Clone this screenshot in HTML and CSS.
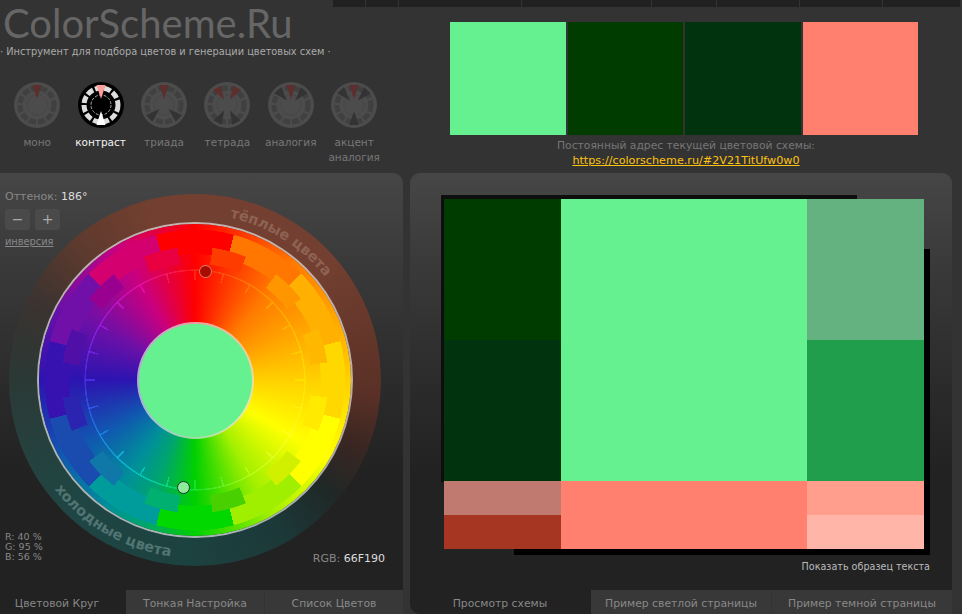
FILE: index.html
```html
<!DOCTYPE html>
<html lang="ru">
<head>
<meta charset="utf-8">
<title>ColorScheme.Ru</title>
<link rel="stylesheet" href="styles.css">
</head>
<body>
<svg class="defs" width="0" height="0" aria-hidden="true">
  <defs>
    <polygon id="tri" points="-4.5,-20 4.5,-20 0,-6"/>
    <g id="dial">
      <circle class="dial-disc" r="23"/>
      <circle class="dial-outer" r="17"/>
      <circle class="dial-inner" r="10"/>
    </g>
  </defs>
</svg>
<div class="page">
  <div class="topbar">
    <span class="tb tb1"></span><span class="tb tb2"></span><span class="tb tb3"></span><span class="tb tb4"></span><span class="tb tb5"></span><span class="tb tb6"></span><span class="tb tb7"></span><span class="tb tb8"></span>
  </div>
  <header class="head">
    <div class="brand">
      <h1 class="logo">ColorScheme.Ru</h1>
      <p class="tagline">· Инструмент для подбора цветов и генерации цветовых схем ·</p>
      <div class="modes">
        <div class="mode">
          <svg class="dial" viewBox="-23 -23 46 46"><use href="#dial"/><use href="#tri" class="t-red"/></svg>
          <span>моно</span>
        </div>
        <div class="mode active">
          <svg class="dial" viewBox="-23 -23 46 46"><use href="#dial"/><use href="#tri" class="t-red"/><use href="#tri" class="t-dark" transform="rotate(180)"/></svg>
          <span>контраст</span>
        </div>
        <div class="mode">
          <svg class="dial" viewBox="-23 -23 46 46"><use href="#dial"/><use href="#tri" class="t-red"/><use href="#tri" class="t-dark" transform="rotate(132)"/><use href="#tri" class="t-dark" transform="rotate(228)"/></svg>
          <span>триада</span>
        </div>
        <div class="mode">
          <svg class="dial" viewBox="-23 -23 46 46"><use href="#dial"/><use href="#tri" class="t-red" transform="rotate(-30)"/><use href="#tri" class="t-red" transform="rotate(30)"/><use href="#tri" class="t-dark" transform="rotate(152)"/><use href="#tri" class="t-dark" transform="rotate(208)"/></svg>
          <span>тетрада</span>
        </div>
        <div class="mode">
          <svg class="dial" viewBox="-23 -23 46 46"><use href="#dial"/><use href="#tri" class="t-red"/><use href="#tri" class="t-dark" transform="rotate(42)"/><use href="#tri" class="t-dark" transform="rotate(-42)"/></svg>
          <span>аналогия</span>
        </div>
        <div class="mode">
          <svg class="dial" viewBox="-23 -23 46 46"><use href="#dial"/><use href="#tri" class="t-red"/><use href="#tri" class="t-dark" transform="rotate(42)"/><use href="#tri" class="t-dark" transform="rotate(-42)"/><use href="#tri" class="t-dark" transform="rotate(180)"/></svg>
          <span>акцент<br>аналогия</span>
        </div>
      </div>
    </div>
    <div class="current">
      <div class="swatches">
        <div class="sw c-main"></div>
        <div class="sw c-dark1"></div>
        <div class="sw c-dark2"></div>
        <div class="sw c-coral"></div>
      </div>
      <p class="permalink-label">Постоянный адрес текущей цветовой схемы:</p>
      <a class="permalink" href="#">https://colorscheme.ru/#2V21TitUfw0w0</a>
    </div>
  </header>
  <main class="columns">
    <section class="col col-left">
      <div class="panel panel-left">
        <div class="wheel">
          <div class="band"></div>
          <div class="disc base"></div>
          <div class="disc blocks"></div>
          <div class="disc tiles"></div>
          <div class="disc track"></div>
          <div class="disc ticks"></div>
          <div class="hub"></div>
          <svg class="wheel-text" viewBox="0 0 372 372">
            <defs>
              <path id="arc-warm" d="M43.7 100.5A166 166 0 0 1 328.3 271.5"/>
              <path id="arc-cold" d="M31.8 97A178 178 0 0 0 340.2 275"/>
            </defs>
            <text class="warm"><textPath href="#arc-warm" startOffset="50.5%" text-anchor="middle">тёплые цвета</textPath></text>
            <text class="cold"><textPath href="#arc-cold" startOffset="50%" text-anchor="middle">холодные цвета</textPath></text>
          </svg>
          <span class="pin pin-red"></span>
          <span class="pin pin-green"></span>
        </div>
        <div class="controls">
          <div class="hue"><span>Оттенок:</span> <b>186°</b></div>
          <div class="steppers"><button class="step">−</button><button class="step">+</button></div>
          <a class="invert" href="#">инверсия</a>
        </div>
        <div class="rgb-list">R: 40 %<br>G: 95 %<br>B: 56 %</div>
        <div class="rgb-hex">RGB: <b>66F190</b></div>
      </div>
      <nav class="tabs tabs-left">
        <span class="tab on t1">Цветовой Круг</span>
        <span class="tab t2">Тонкая Настройка</span>
        <span class="tab t3">Список Цветов</span>
      </nav>
    </section>
    <section class="col col-right">
      <div class="panel panel-right">
        <div class="scheme">
          <div class="cell c-dark1"></div>
          <div class="cell c-dark2"></div>
          <div class="cell c-rose"></div>
          <div class="cell c-brick"></div>
          <div class="cell main c-main"></div>
          <div class="cell main c-coral"></div>
          <div class="cell c-pale"></div>
          <div class="cell c-mid"></div>
          <div class="cell c-coral2"></div>
          <div class="cell c-coral3"></div>
        </div>
        <a class="sample" href="#">Показать образец текста</a>
      </div>
      <nav class="tabs tabs-right">
        <span class="tab on t4">Просмотр схемы</span>
        <span class="tab t5">Пример светлой страницы</span>
        <span class="tab t6">Пример темной страницы</span>
      </nav>
    </section>
  </main>
</div>
</body>
</html>
```
FILE: styles.css
```css
* { box-sizing: border-box; }
html, body { margin: 0; padding: 0; }
body {
  width: 962px;
  height: 614px;
  overflow: hidden;
  background: #333;
  font-family: "DejaVu Sans", sans-serif;
  font-size: 10.5px;
  color: #777;
}
.defs { position: absolute; }
.page { display: flex; flex-direction: column; height: 614px; }

.topbar { display: flex; height: 7px; margin-left: 333px; width: 627px; gap: 1px; flex: none; }
.tb { background: #212121; height: 7px; }
.tb1 { width: 32px; } .tb2 { width: 32px; } .tb3 { width: 122px; } .tb4 { width: 129px; }
.tb5 { width: 64px; } .tb6 { width: 82px; } .tb7 { width: 82px; } .tb8 { flex: 1; }

.head { display: flex; height: 166px; flex: none; }
.brand { width: 403px; flex: none; }
.logo {
  margin: 0 0 0 3px;
  font-family: "Lato", sans-serif;
  font-weight: 400;
  font-size: 40px;
  line-height: 33px;
  color: #666;
}
.tagline { margin: 5px 0 0; font-size: 9.8px; line-height: 14px; color: #aaa; white-space: nowrap; }
.modes { display: grid; grid-template-columns: repeat(6, 63.4px); margin: 23px 0 0 5.5px; }
.mode {
  --disc: #4c4c4c; --outer: #404040; --inner: #444;
  display: flex; flex-direction: column; align-items: center; text-align: center; line-height: 15px; color: #777;
}
.mode span { margin-top: 7px; }
.dial { width: 46px; height: 46px; display: block; }
.dial-disc { fill: var(--disc); }
.dial-outer { fill: none; stroke: var(--outer); stroke-width: 5; stroke-dasharray: 7 2.2; }
.dial-inner { fill: none; stroke: var(--inner); stroke-width: 1; stroke-dasharray: 3 1.5; }
.t-red { fill: #5d2e2e; }
.t-dark { fill: #333; }
.mode.active { --disc: #000; --outer: #ddd; --inner: #aaa; color: #f2f2f2; }
.active .t-red { fill: #ff9c9c; }
.active .t-dark { fill: #fff; }

.current { flex: none; margin-left: 47px; width: 468px; padding-top: 15px; text-align: center; }
.swatches { display: flex; gap: 2px; height: 113px; }
.sw { flex: 1; }
.permalink-label { margin: 3px 0 0; padding-left: 4px; font-size: 10.75px; line-height: 15px; color: #777; white-space: nowrap; }
.permalink { display: block; padding-left: 4px; font-size: 11.2px; line-height: 15px; color: #ffc20e; white-space: nowrap; }

.c-main { background: #66f190; }
.c-dark1 { background: #003c00; }
.c-dark2 { background: #00330e; }
.c-coral { background: #ff806e; }
.c-pale { background: #63b280; }
.c-mid { background: #219e4b; }
.c-rose { background: #c07a70; }
.c-brick { background: #a63522; }
.c-coral2 { background: #ff9e8c; }
.c-coral3 { background: #ffb5a8; }

.columns { display: flex; flex: 1; min-height: 0; }
.col { display: flex; flex-direction: column; }
.col-left { width: 403px; flex: none; }
.col-right { width: 542px; flex: none; margin-left: 7px; }
.panel {
  height: 417px;
  flex: none;
  background: linear-gradient(180deg, #464646 0, #3a3a3a 90px, #2a2a2a 220px, #222 300px, #222 100%);
}
.panel-left { border-top-right-radius: 10px; display: grid; grid-template: 1fr / 1fr; }
.panel-left > * { grid-area: 1 / 1; }
.panel-right { border-radius: 10px 10px 0 0; padding: 26px 28px 0 34px; }

.controls { padding: 16px 0 0 5px; align-self: start; justify-self: start; }
.hue { font-size: 11px; line-height: 16px; color: #888; }
.hue b { font-weight: 400; color: #ddd; }
.steppers { display: flex; gap: 5px; margin-top: 4px; }
.step {
  width: 25px; height: 21px; padding: 0; border: 0; border-radius: 3px;
  background: #4a4a4a; color: #aaa;
  font: 400 14px/21px "DejaVu Sans", sans-serif;
}
.invert { display: block; margin-top: 5px; line-height: 14px; color: #888; font-size: 9.8px; }

.rgb-list { align-self: end; justify-self: start; margin: 0 0 28px 5px; font-size: 9.5px; line-height: 10px; color: #888; }
.rgb-hex { align-self: end; justify-self: end; margin: 0 18px 24px 0; font-size: 11px; line-height: 14px; color: #888; }
.rgb-hex b { font-weight: 400; color: #ddd; }

.wheel {
  position: relative;
  width: 372px; height: 372px;
  margin: 21px 0 0 9px;
  align-self: start; justify-self: start;
  display: grid;
  place-items: center;
}
.wheel > * { grid-area: 1 / 1; }
.band {
  width: 372px; height: 372px; border-radius: 50%;
  background: conic-gradient(#733f30 0, #723f30 50deg, #5a3026 95deg, #3a2622 112deg, #1f2826 130deg, #1c3838 150deg, #1c4240 180deg, #1f4644 225deg, #26403d 250deg, #2b3835 272deg, #3a3330 295deg, #5e3a2e 320deg, #733f30 345deg);
}
.disc { width: 316px; height: 316px; border-radius: 50%; }
.base {
  box-shadow: 0 0 0 2px rgba(225, 225, 225, .72);
  width: 312px; height: 312px;
  background: conic-gradient(#f00 0, #ff7a00 40deg, #ffae00 70deg, #ffd400 92deg, #ff0 120deg, #a4f000 150deg, #00d000 180deg, #00a470 200deg, #008f9a 215deg, #1058b0 240deg, #2c14b0 270deg, #6a10a8 298deg, #c80080 330deg, #f00 360deg);
}
.blocks {
  background: conic-gradient(from -15deg,
    #f00 0 30deg, #ff7600 0 60deg, #ffb000 0 90deg, #ffd800 0 120deg,
    #ff0 0 150deg, #a0ee00 0 180deg, #00d800 0 210deg, #009c9c 0 240deg,
    #1a4cb0 0 270deg, #3812b0 0 300deg, #7010a8 0 330deg, #d40070 0 360deg);
  -webkit-mask-image: radial-gradient(circle, transparent 125.5px, #000 126px, #000 150px, transparent 150.5px);
  mask-image: radial-gradient(circle, transparent 125.5px, #000 126px, #000 150px, transparent 150.5px);
}
.tiles {
  background: conic-gradient(
    transparent 0 7.5deg, #ff3c00 0 22.5deg, transparent 0 37.5deg, #ff9600 0 52.5deg,
    transparent 0 67.5deg, #ffb800 0 82.5deg, transparent 0 97.5deg, #ffea00 0 112.5deg,
    transparent 0 127.5deg, #d0f000 0 142.5deg, transparent 0 157.5deg, #48d000 0 172.5deg,
    transparent 0 187.5deg, #00b070 0 202.5deg, transparent 0 217.5deg, #1078a8 0 232.5deg,
    transparent 0 247.5deg, #2a24b0 0 262.5deg, transparent 0 277.5deg, #5010a8 0 292.5deg,
    transparent 0 307.5deg, #9a0090 0 322.5deg, transparent 0 337.5deg, #ea0040 0 352.5deg, transparent 0 360deg);
  -webkit-mask-image: radial-gradient(circle, transparent 116px, #000 116.5px, #000 133px, transparent 133.5px);
  mask-image: radial-gradient(circle, transparent 116px, #000 116.5px, #000 133px, transparent 133.5px);
}
.track, .ticks {
  opacity: .7;
  background: conic-gradient(#ff3020 0, #ffa000 40deg, #ffd000 70deg, #ffe800 92deg, #ffff30 120deg, #c0ff20 150deg, #20e840 180deg, #00e0c0 205deg, #10c8e0 220deg, #2a70ff 250deg, #5a30f0 272deg, #a020f0 298deg, #f010b0 330deg, #ff3020 360deg);
}
.track {
  -webkit-mask-image: radial-gradient(circle, transparent 108.8px, #000 109.3px, #000 110.3px, transparent 110.8px);
  mask-image: radial-gradient(circle, transparent 108.8px, #000 109.3px, #000 110.3px, transparent 110.8px);
}
.ticks {
  -webkit-mask-image: radial-gradient(circle, transparent 100px, #000 100.5px, #000 110px, transparent 110.5px), repeating-conic-gradient(from -.4deg, #000 0 .8deg, transparent 0 15deg);
  mask-image: radial-gradient(circle, transparent 100px, #000 100.5px, #000 110px, transparent 110.5px), repeating-conic-gradient(from -.4deg, #000 0 .8deg, transparent 0 15deg);
  -webkit-mask-composite: source-in;
  mask-composite: intersect;
}
.hub {
  width: 113px; height: 113px; border-radius: 50%;
  background: #66f190;
  box-shadow: 0 0 0 2px rgba(225, 225, 225, .72);
}
.wheel-text { width: 372px; height: 372px; display: block; }
.warm, .cold { font-family: "DejaVu Sans", sans-serif; font-size: 14.5px; font-weight: 700; }
.warm { fill: #8e6254; }
.cold { fill: #527472; }
.pin { position: absolute; border-radius: 50%; width: 13px; height: 13px; }
.pin-red { left: 190px; top: 71px; background: #a80c00; border: 1px solid rgba(255, 210, 200, .55); }
.pin-green { left: 168px; top: 287px; background: #90ec9c; border: 1px solid #14352a; }

.tabs { display: flex; flex: 1; }
.tab {
  display: flex; align-items: center; justify-content: center;
  background: #383838; color: #888; font-size: 10.8px; padding-top: 3px; white-space: nowrap;
}
.tab.on { background: #222; }
.tabs-left .t1 { width: 126px; padding-right: 12px; }
.tabs-left .t2 { width: 138px; margin-right: 1px; }
.tabs-left .t3 { flex: 1; }
.tabs-right .t4 { width: 181px; border-bottom-left-radius: 10px; padding-right: 1px; }
.tabs-right .t5 { width: 180px; margin-right: 1px; }
.tabs-right .t6 { flex: 1; }

.scheme {
  position: relative;
  width: 480px; height: 350px;
  display: grid;
  grid-auto-flow: column;
  grid-template-columns: 117px 246px 117px;
  grid-template-rows: 141px 141px 34px 34px;
}
.scheme::before, .scheme::after { content: ""; position: absolute; z-index: 0; }
.scheme::before { left: -3px; top: -4px; width: 416px; height: 287px; background: #0e0e0e; }
.scheme::after { left: 70px; top: 50px; width: 416px; height: 306px; background: #000; }
.cell { position: relative; z-index: 1; }
.main { grid-row: span 2; }
.sample { display: block; width: 486px; margin-top: 11px; text-align: right; line-height: 14px; color: #bbb; font-size: 9.6px; text-decoration: none; }
```
